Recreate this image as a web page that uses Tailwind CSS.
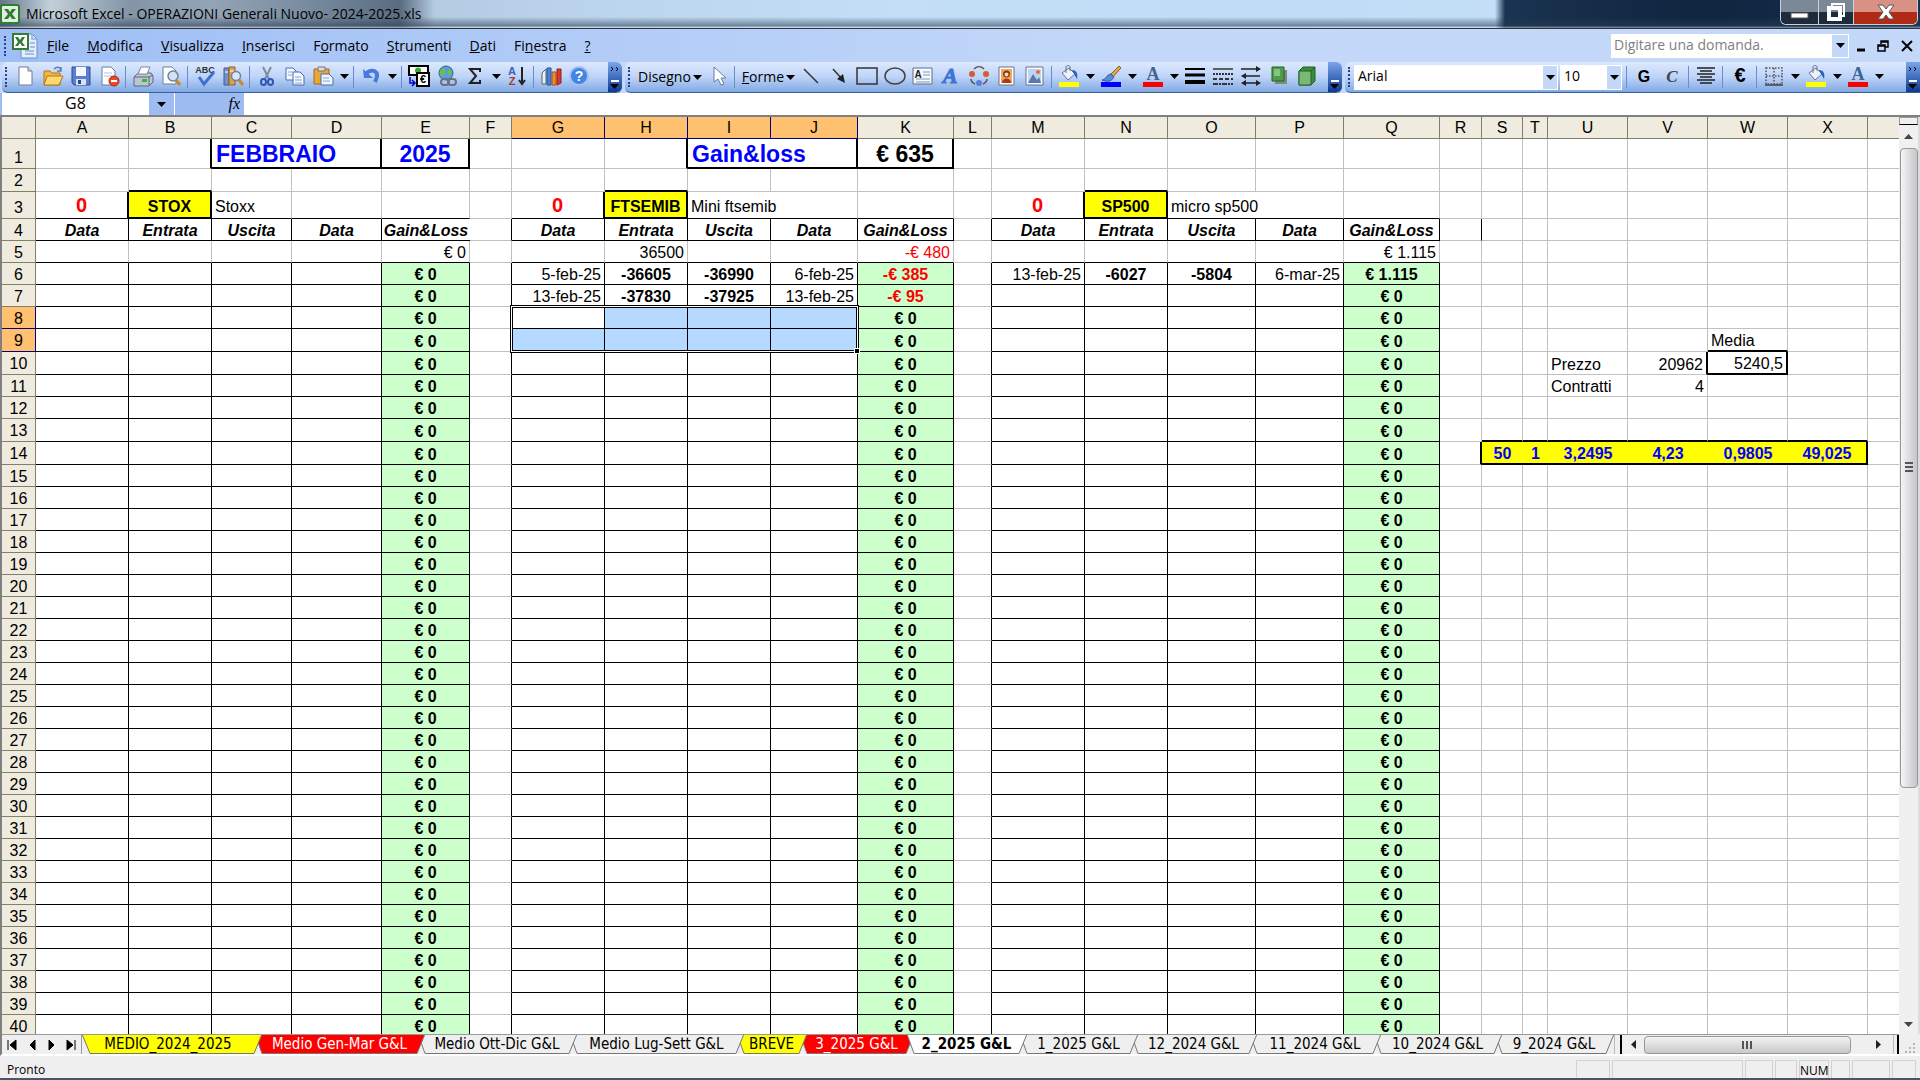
<!DOCTYPE html>
<html lang="it">
  <head>
    <meta charset="UTF-8" />
    <meta name="viewport" content="width=device-width, initial-scale=1.0" />
    <title>Microsoft Excel - OPERAZIONI Generali Nuovo- 2024-2025.xls</title>
    <script src="https://cdn.jsdelivr.net/npm/@tailwindcss/browser@4"></script>
  </head>
  <body
    class="flex h-screen flex-col overflow-hidden bg-[#efefef] font-['Open_Sans','Noto_Sans',sans-serif] text-sm text-black"
  >
    <!-- Title bar -->
    <header
      class="relative flex h-[29px] shrink-0 items-center justify-between border-b border-[#2b3442] bg-[linear-gradient(to_right,#64768a_0px,#c3d0da_50px,#8294a6_130px,#92a4b5_210px,#7b8da0_300px,#5a6c80_400px,#b4cbe2_435px,#bcd5ee_600px,#c3def6_900px,#bfdcf7_1300px,#c3def6_1495px,#1a3350_1505px,#0f2540_1700px,#16304d_1920px)]"
    >
      <div
        class="pointer-events-none absolute inset-0 bg-[linear-gradient(to_bottom,transparent_60%,rgba(40,60,85,0.55)_92%,rgba(255,255,255,0.5)_100%)]"
      ></div>
      <div class="relative flex items-center gap-1.5 pb-px">
        <svg class="h-5 w-5" viewBox="0 0 20 20">
          <rect x="1" y="1" width="18" height="18" rx="2" fill="#dfeedd" stroke="#2f7d32" stroke-width="2" />
          <path d="M4 5h4l2 3 2-3h4l-4 5 4 5h-4l-2-3-2 3H4l4-5z" fill="#2f7d32" />
        </svg>
        <h1 class="text-sm leading-5">
          Microsoft Excel - OPERAZIONI Generali Nuovo- 2024-2025.xls
        </h1>
      </div>
      <div
        class="relative mr-0.5 flex h-[25px] self-start overflow-hidden rounded-b-md border border-t-0 border-[#c9d3de]"
      >
        <button aria-label="Riduci a icona" class="flex h-full w-[38px] items-center justify-center border-r border-[#c9d3de] bg-linear-to-b from-[#7b8896] from-50% to-[#1d2b3c] to-50%">
          <svg class="h-4 w-5" viewBox="0 0 20 16"><rect x="1" y="9" width="17" height="5" fill="#fff" stroke="#555" /></svg>
        </button>
        <button aria-label="Ripristina" class="flex h-full w-[35px] items-center justify-center border-r border-[#c9d3de] bg-linear-to-b from-[#7b8896] from-50% to-[#1d2b3c] to-50%">
          <svg class="h-5 w-5" viewBox="0 0 20 20" fill="none" stroke="#fff" stroke-width="2"><path d="M6 4V2h12v12h-3" /><rect x="3" y="6" width="11" height="11" stroke-width="4" /></svg>
        </button>
        <button aria-label="Chiudi" class="flex h-full w-[63px] items-center justify-center bg-linear-to-b from-[#d99183] from-50% to-[#b02a16] to-50%">
          <svg class="h-5 w-6" viewBox="0 0 24 20"><path d="M4 3h5l3 4 3-4h5l-5 7 5 7h-5l-3-4-3 4H4l5-7z" fill="#fff" stroke="#555" /></svg>
        </button>
      </div>
    </header>

    <!-- Menu bar -->
    <nav
      class="flex h-[33px] shrink-0 items-center bg-linear-to-r from-[#9ebef5] to-[#c4d9f9] to-60% pl-1"
    >
      <span class="h-5 w-0 border-l-2 border-dotted border-[#27418a]"></span>
      <svg class="ml-1.5 h-7 w-[26px]" viewBox="0 0 26 28">
        <path d="M9 2h11l5 5v19H9z" fill="#e3edfb" stroke="#6c8fc9" />
        <path d="M20 2v5h5M13 19h9M13 22h9M18 11h5M18 15h5" fill="none" stroke="#8fb0e0" stroke-width="1.500" />
        <rect x="1" y="2" width="15" height="15" fill="#fff" stroke="#357a35" stroke-width="2" />
        <path d="M3 5h3l2 3 2-3h3l-3 5 3 4h-3l-2-3-2 3H3l3-4z" fill="#2f7d32" />
      </svg>
      <div id="menu" class="flex"></div>
      <div class="ml-auto flex h-6 w-[238px] border border-white bg-white">
        <input
          aria-label="Digitare una domanda"
          placeholder="Digitare una domanda."
          class="min-w-0 flex-1 px-0.5 pb-0.5 text-sm placeholder-[#808080] outline-none"
        />
        <button aria-label="Apri elenco domande" class="flex w-4 items-center justify-center bg-[#c4d9f9]">
          <svg class="h-[5px] w-[9px]" viewBox="0 0 9 5"><path d="M0 0h9L4.500 5z" /></svg>
        </button>
      </div>
      <div class="ml-px flex items-center">
        <button aria-label="Riduci finestra" class="flex w-[22px] justify-center"><svg class="h-4 w-3" viewBox="0 0 12 16"><path d="M2 12h8" stroke="#000" stroke-width="3" /></svg></button>
        <button aria-label="Ripristina finestra" class="flex w-[22px] justify-center"><svg class="h-4 w-3" viewBox="0 0 12 16" fill="none" stroke="#000" stroke-width="1.500"><path d="M4 6V3h7v6H8M4 4h7M1 7h7v6H1zM1 8h7" /></svg></button>
        <button aria-label="Chiudi finestra" class="flex w-[26px] justify-center"><svg class="h-4 w-3" viewBox="0 0 12 16"><path d="M1 3l10 10M11 3L1 13" stroke="#000" stroke-width="2" /></svg></button>
      </div>
    </nav>

    <!-- Toolbars -->
    <div class="flex h-[31px] shrink-0 gap-[3px] bg-[#c4d9f9] pl-0.5">
      <div id="standardBar" class="flex w-[620px] items-center overflow-hidden rounded-md border-b border-[#3b619c] bg-linear-to-b from-[#dde9fd] via-[#bdd3f8] to-[#81a9e2] pl-[3px]"></div>
      <div id="drawBar" class="flex w-[717px] items-center overflow-hidden rounded-md border-b border-[#3b619c] bg-linear-to-b from-[#dde9fd] via-[#bdd3f8] to-[#81a9e2] pl-[3px]"></div>
      <div id="formatBar" class="flex flex-1 items-center overflow-hidden rounded-l-md border-b border-[#3b619c] bg-linear-to-b from-[#dde9fd] via-[#bdd3f8] to-[#81a9e2] pl-[3px]">
        <span class="mr-1 h-5 w-0 border-l-2 border-dotted border-[#27418a]"></span>
        <div class="relative h-[25px] w-[204px] bg-white">
          <select aria-label="Tipo di carattere" class="h-full w-full appearance-none px-1 pb-0.5 text-sm outline-none"><option>Arial</option></select>
          <span class="pointer-events-none absolute inset-y-px right-px flex w-3.5 items-center justify-center bg-[#c4d9f9]"><svg class="h-[5px] w-[9px]" viewBox="0 0 9 5"><path d="M0 0h9L4.500 5z" /></svg></span>
        </div>
        <div class="relative mr-0.5 ml-0.5 h-[25px] w-[62px] bg-white">
          <select aria-label="Dimensione carattere" class="h-full w-full appearance-none px-1 pb-0.5 text-sm outline-none"><option>10</option></select>
          <span class="pointer-events-none absolute inset-y-px right-px flex w-3.5 items-center justify-center bg-[#c4d9f9]"><svg class="h-[5px] w-[9px]" viewBox="0 0 9 5"><path d="M0 0h9L4.500 5z" /></svg></span>
        </div>
      </div>
    </div>

    <!-- Formula bar -->
    <div class="flex h-[22px] shrink-0 bg-white">
      <div class="flex w-[174px] border-l-2 border-[#9fbcf2] bg-[#9fbcf2]">
        <input aria-label="Casella nome" value="G8" class="min-w-0 flex-1 bg-white pb-0.5 text-center text-base leading-4 outline-none" />
        <button aria-label="Elenco nomi" class="flex w-[25px] items-center justify-center"><svg class="h-[5px] w-[9px]" viewBox="0 0 9 5"><path d="M0 0h9L4.500 5z" /></svg></button>
      </div>
      <div class="ml-px flex w-[69px] items-center justify-end bg-[#9fbcf2] pr-1">
        <button aria-label="Inserisci funzione" class="font-['Liberation_Serif',serif] text-base leading-5 italic">fx</button>
      </div>
      <input aria-label="Barra della formula" class="min-w-0 flex-1 bg-white outline-none" />
    </div>

    <!-- Sheet -->
    <main class="flex min-h-0 flex-1 border-t-2 border-l-2 border-[#808080] bg-white">
      <div class="min-w-0 flex-1 overflow-hidden">
        <table
          id="sheet"
          class="w-full table-fixed border-separate border-spacing-0 font-['Liberation_Sans',Arial,sans-serif] text-base leading-[18px]"
        >
          <colgroup id="cols"></colgroup>
          <thead><tr id="colHeads" class="h-[22px]"></tr></thead>
          <tbody id="rows"></tbody>
        </table>
      </div>
      <!-- Vertical scrollbar -->
      <div class="flex w-[21px] shrink-0 flex-col items-center border-r-2 border-[#dcdcdc] bg-[#f0f0f0]">
        <div class="h-2 w-full border border-[#999] border-b-black bg-[#efefef]"></div>
        <button aria-label="Scorri su" class="flex h-[23px] items-center"><svg class="h-[5px] w-[9px]" viewBox="0 0 9 5"><path d="M0 5h9L4.500 0z" fill="#444" /></svg></button>
        <div class="flex h-[640px] w-[18px] items-center justify-center rounded-sm border border-[#989898] bg-linear-to-r from-[#f5f5f5] to-[#c6c6ca]">
          <svg class="h-3 w-2" viewBox="0 0 8 12"><path d="M0 1h8M0 5h8M0 9h8" stroke="#555" stroke-width="2" /></svg>
        </div>
        <button aria-label="Scorri giù" class="mt-auto flex h-5 items-center"><svg class="h-[5px] w-[9px]" viewBox="0 0 9 5"><path d="M0 0h9L4.500 5z" fill="#444" /></svg></button>
      </div>
    </main>

    <!-- Sheet tabs -->
    <div class="flex h-[22px] shrink-0 border-b-2 border-l-2 border-b-white border-l-[#808080] bg-[#efefef]">
      <div id="tabNav" class="flex w-20 shrink-0 items-center justify-around border-t border-r border-[#999]"></div>
      <div id="tabs" class="flex min-w-0 flex-1 overflow-hidden border-t border-[#999] font-['DejaVu_Sans_Condensed','Open_Sans',sans-serif]"></div>
      <div class="flex w-[285px] shrink-0 items-center border-t border-[#999]">
        <span class="h-full w-2 border-r-2 border-l border-r-black border-l-[#bbb]"></span>
        <button aria-label="Scorri a sinistra" class="flex w-[22px] justify-center"><svg class="h-[9px] w-[5px]" viewBox="0 0 5 9"><path d="M5 0v9L0 4.500z" fill="#222" /></svg></button>
        <div class="flex h-[18px] flex-1 items-center justify-center rounded-sm border border-[#989898] bg-linear-to-b from-[#f3f3f3] to-[#c9c9cc]">
          <svg class="h-2 w-3" viewBox="0 0 12 8"><path d="M1 0v8M5 0v8M9 0v8" stroke="#555" stroke-width="2" /></svg>
        </div>
        <button aria-label="Scorri a destra" class="mr-1 ml-4 flex w-[22px] justify-center"><svg class="h-[9px] w-[5px]" viewBox="0 0 5 9"><path d="M0 0v9l5-4.500z" fill="#222" /></svg></button>
        <span class="h-full w-1.5 border-r-2 border-l border-r-black border-l-[#bbb]"></span>
      </div>
      <div class="flex w-[21px] shrink-0 items-end justify-center">
        <svg class="h-3 w-3" viewBox="0 0 12 12" fill="#b5b5b5"><path d="M9 1h2v2H9zM5 5h2v2H5zM9 5h2v2H9zM1 9h2v2H1zM5 9h2v2H5zM9 9h2v2H9z" /></svg>
      </div>
    </div>

    <!-- Status bar -->
    <footer class="flex h-6 shrink-0 items-stretch justify-between border-b-2 border-[#4a5568] bg-[#efefef] pt-1 pr-1">
      <span class="pl-[7px] text-xs leading-5">Pronto</span>
      <div id="panels" class="flex gap-0.5 text-xs leading-5"></div>
    </footer>

    <script>
      // ---------- icons ----------
      const arrowSvg =
        '<svg class="h-[5px] w-[9px]" viewBox="0 0 9 5"><path d="M0 0h9L4.5 5z"/></svg>';

      const bucket =
        '<path d="M4 8l7-5 6 6-7 6z" fill="#eef3fb" stroke="#66748c"/><path d="M8 8V2c0-2 4-2 4 0v4" fill="none" stroke="#66748c"/><path d="M14 5c5 0 6 4 5 9l-3-5z" fill="#2f5fc0"/><path d="M1 17h20v5H1z" fill="#ff0"/>';
      const letterA =
        '<text x="11" y="15" text-anchor="middle" font-family="Liberation Serif" font-weight="bold" font-size="18" fill="#3e6496">A</text><path d="M1 17h20v5H1z" fill="#f00"/>';

      const icons = {
        new: '<path d="M5 2h9l4 4v14H5z" fill="#fff" stroke="#6b7f9f"/><path d="M14 2v4h4" fill="#d3deef" stroke="#6b7f9f"/>',
        open: '<path d="M2 6h6l2 2h8v12H2z" fill="#f3b53c" stroke="#b5761c"/><path d="M5 11h16l-4 9H2z" fill="#ffd86f" stroke="#b5761c"/><path d="M12 4c3-3 6-2 7 1M19 2v4h-4" fill="none" stroke="#5b7fae" stroke-width="1.5"/>',
        save: '<path d="M2 2h18v18H4l-2-2z" fill="#5a7fd0" stroke="#2b4a93"/><path d="M6 2h10v9H6z" fill="#f2f5fb"/><path d="M6 14h10v6H6z" fill="#d9e2f3"/><path d="M8 15h3v4H8z" fill="#2b4a93"/>',
        perm: '<path d="M4 2h9l4 4v14H4z" fill="#fff" stroke="#6b7f9f"/><path d="M6 8h8M6 11h8" stroke="#b4c3dd"/><circle cx="16" cy="16" r="5" fill="#e8492a" stroke="#a92c12"/><path d="M13 16h6" stroke="#fff" stroke-width="2"/>',
        print: '<path d="M2 12l4-4h13l2 3v6l-4 4H2z" fill="#bcc5d2" stroke="#5d6878"/><path d="M9 2h9l-3 7H6z" fill="#fff" stroke="#7b8799"/><path d="M2 12h15v8M17 12l4-2" fill="none" stroke="#5d6878"/><path d="M10 14h5v3h-5z" fill="#3fb52f"/>',
        preview: '<path d="M3 2h9l4 4v13H3z" fill="#fff" stroke="#6b7f9f"/><circle cx="13" cy="11" r="5" fill="#cfe3f7" stroke="#6f8299" stroke-width="1.5"/><path d="M16 15l4 5" stroke="#c8882d" stroke-width="3"/>',
        spell: '<text x="11" y="8" text-anchor="middle" font-family="Liberation Sans" font-weight="bold" font-size="9" fill="#333">ABC</text><path d="M5 12l5 7L20 7" fill="none" stroke="#3f6fd1" stroke-width="3"/>',
        research: '<path d="M2 3h5v17H2z" fill="#7890c9" stroke="#44588f"/><path d="M7 2h6v18H7z" fill="#d9a14d" stroke="#8a6424"/><path d="M3 7h3M8 6h4" stroke="#fff"/><circle cx="14" cy="11" r="4.500" fill="#d8e8f8" stroke="#6f8299" stroke-width="1.5"/><path d="M17 15l4 5" stroke="#c8882d" stroke-width="3"/>',
        cut: '<path d="M7 2l6 12M15 2L9 14" stroke="#7c8ca3" stroke-width="2"/><ellipse cx="7.500" cy="17" rx="2.500" ry="3" fill="none" stroke="#2c57b8" stroke-width="2"/><ellipse cx="14.500" cy="17" rx="2.500" ry="3" fill="none" stroke="#2c57b8" stroke-width="2"/>',
        copy: '<path d="M2 3h7l3 3v9H2z" fill="#f4f8ff" stroke="#4b6cab"/><path d="M9 7h7l4 4v9H9z" fill="#f4f8ff" stroke="#4b6cab"/><path d="M4 7h5M4 10h4M11 12h6M11 15h7M11 18h7" stroke="#8aa5d6"/>',
        paste: '<path d="M2 4h15v15H2z" fill="#e9a63a" stroke="#a36b17"/><path d="M6 2h7v4H6z" fill="#d9dde5" stroke="#777"/><path d="M9 9h8l4 4v7H9z" fill="#eff5ff" stroke="#4b6cab"/><path d="M11 13h6M11 16h7" stroke="#8aa5d6"/>',
        undo: '<path d="M3 4l1 9h9z" fill="#4a78dc"/><path d="M6 9c5-6 15-4 9 8" fill="none" stroke="#4a78dc" stroke-width="4"/>',
        currency: '<path d="M1 1h19v9H1z" fill="#fff" stroke="#000" stroke-width="2"/><circle cx="10" cy="5.500" r="3" fill="#3a3"/><path d="M9 8h12v13H9z" fill="#fff" stroke="#000" stroke-width="2"/><text x="15" y="18" text-anchor="middle" font-family="Liberation Sans" font-weight="bold" font-size="11">€</text><path d="M2 12v6h5M4 15l3 3-3 3" fill="none" stroke="#00c" stroke-width="1.500"/>',
        link: '<circle cx="10" cy="8" r="7" fill="#5b9be0" stroke="#33639b"/><path d="M6 3c3 0 5 2 3 4s0 4-3 4-3-5 0-8zM13 4l3 3-2 4-3-2z" fill="#6cbf4b"/><rect x="5" y="14" width="8" height="6" rx="3" fill="none" stroke="#68727f" stroke-width="2"/><rect x="12" y="14" width="8" height="6" rx="3" fill="none" stroke="#68727f" stroke-width="2"/>',
        sum: '<path d="M16 7V4H6l6 7-6 7h10v-3" fill="none" stroke="#222" stroke-width="2"/>',
        sort: '<text x="6" y="10" text-anchor="middle" font-family="Liberation Sans" font-weight="bold" font-size="11" fill="#3a62b5">A</text><text x="6" y="20" text-anchor="middle" font-family="Liberation Sans" font-weight="bold" font-size="11" fill="#a33c3c">Z</text><path d="M16 2v17M13 15l3 4 3-4" fill="none" stroke="#222" stroke-width="2"/>',
        chart: '<path d="M2 8l4-4v15H2z" fill="#e9eef7" stroke="#566"/><path d="M7 3h4v17H7z" fill="#4b83dc" stroke="#24529b"/><path d="M12 7h4v13h-4z" fill="#ef8d2d" stroke="#a35414"/><path d="M17 4h4v14l-4 2z" fill="#d93a28" stroke="#8d2013"/>',
        help: '<circle cx="11" cy="11" r="9" fill="#4484e4" stroke="#9fc1f3" stroke-width="2"/><text x="11" y="16" text-anchor="middle" font-family="Liberation Sans" font-weight="bold" font-size="14" fill="#fff">?</text>',
        pointer: '<path d="M7 2v15l4-3 3 6 3-1-3-6h5z" fill="#fff" stroke="#6d7d99"/>',
        line: '<path d="M4 4l14 14" stroke="#333" stroke-width="1.500"/>',
        arrow: '<path d="M5 4l9 10" stroke="#333" stroke-width="1.500"/><path d="M17 18l-8-4 6-5z" fill="#222"/>',
        rect: '<path d="M1 3h20v16H1z" fill="none" stroke="#333" stroke-width="1.500"/>',
        oval: '<ellipse cx="11" cy="11" rx="10" ry="8" fill="none" stroke="#444" stroke-width="1.500"/>',
        textbox: '<path d="M1 3h19v16H1z" fill="#f4f8ff" stroke="#5c6f92"/><text x="6" y="13" text-anchor="middle" font-family="Liberation Sans" font-weight="bold" font-size="10" fill="#222">A</text><path d="M11 7h7M11 10h7M4 14h14M4 17h14" stroke="#8194b5"/>',
        wordart: '<text x="10" y="18" text-anchor="middle" font-family="Liberation Serif" font-style="italic" font-weight="bold" font-size="22" fill="#3f74d4" stroke="#3f74d4">A</text>',
        diagram: '<circle cx="4" cy="9" r="3" fill="#d55b33"/><circle cx="18" cy="9" r="3" fill="#d55b33"/><circle cx="11" cy="18" r="3" fill="#5a7fd6"/><path d="M6 4c3-3 7-3 10 0M3 14c0 3 2 4 4 5M19 14c0 3-2 4-4 5" fill="none" stroke="#555" stroke-width="1.500"/>',
        clip: '<path d="M3 2h15v18H3z" fill="#fff" stroke="#66748c"/><path d="M5 4h11v14H5z" fill="#f2a65a"/><circle cx="10.500" cy="9" r="3.500" fill="#7b3d16"/><circle cx="10.500" cy="9.500" r="2" fill="#ffd9ae"/><path d="M6 18c0-6 9-6 9 0z" fill="#a33b1c"/>',
        picture: '<path d="M2 2h17v18H2z" fill="#f7faff" stroke="#66748c"/><path d="M4 4h13v14H4z" fill="#bcd5f4"/><path d="M4 18l5-9 4 6 2-3 2 6z" fill="#5a79ab"/><circle cx="14" cy="7" r="2" fill="#e46a33"/>',
        fill: bucket,
        brush: '<path d="M19 1l2 2-9 10-3-2z" fill="#e4a24e" stroke="#8a6424"/><path d="M11 9l3 3c-3 5-7 5-12 3 4 0 4-5 9-6z" fill="#5b8ad9" stroke="#2b569f"/><path d="M1 17h20v5H1z" fill="#00f"/>',
        fontcolor: letterA,
        weight: '<path d="M1 4h20" stroke="#000" stroke-width="2"/><path d="M1 10h20" stroke="#000" stroke-width="3"/><path d="M1 17h20" stroke="#000" stroke-width="4"/>',
        dash: '<path d="M1 4h20" stroke="#333" stroke-width="1.500"/><path d="M1 9h20" stroke="#333" stroke-width="2" stroke-dasharray="2 1"/><path d="M1 14h20" stroke="#333" stroke-width="2" stroke-dasharray="4 2"/><path d="M1 19h20" stroke="#333" stroke-width="2" stroke-dasharray="5 1 2 1"/>',
        arrows: '<path d="M1 4h17M2 11h18M4 18h14" stroke="#222" stroke-width="1.500"/><path d="M16 1l5 3-5 3zM6 8l-5 3 5 3zM6 15l-5 3 5 3zM16 15l5 3-5 3z" fill="#222"/>',
        shadow: '<path d="M7 5h12v14H7z" fill="#7d8a80"/><path d="M4 2h12v14H4z" fill="#4f9a4b" stroke="#24602a"/><path d="M6 4h6v7H6z" fill="#86c47b"/>',
        cube: '<path d="M3 6l4-4h12v14l-4 4H3z" fill="#3d8a41" stroke="#24602a"/><path d="M3 6h12v14H3z" fill="#79b973" stroke="#24602a"/><path d="M15 6l4-4" stroke="#24602a"/>',
        bold: '<text x="11" y="17" text-anchor="middle" font-family="Liberation Sans" font-weight="bold" font-size="16">G</text>',
        italic: '<text x="11" y="17" text-anchor="middle" font-family="Liberation Serif" font-style="italic" font-weight="bold" font-size="17" fill="#444">C</text>',
        center: '<path d="M2 3h18M5 6h12M2 9h18M5 12h12M2 15h18M5 18h12" stroke="#222" stroke-width="1.500"/>',
        euro: '<text x="11" y="17" text-anchor="middle" font-family="Liberation Sans" font-weight="bold" font-size="20">€</text>',
        borders: '<path d="M3 3h16v16H3zM11 3v16M3 11h16" fill="none" stroke="#555" stroke-width="1.500" stroke-dasharray="1.500 1.500"/><path d="M2 20h18" stroke="#444" stroke-width="1.500"/>',
      };

      const button = (name, label) =>
        `<button aria-label="${label}" class="flex w-7 shrink-0 items-center justify-center pb-0.5"><svg class="h-[22px] w-[22px]" viewBox="0 0 22 22">${icons[name]}</svg></button>`;
      const drop = (label) =>
        `<button aria-label="${label}" class="flex h-6 w-3.5 shrink-0 items-center justify-center pb-0.5">${arrowSvg}</button>`;
      const textButton = (html) =>
        `<button class="flex shrink-0 items-center gap-0.5 pr-0.5 pl-1 text-sm leading-6"><span>${html}</span>${arrowSvg}</button>`;
      const sep =
        '<span class="mr-[3px] ml-0.5 h-[22px] w-px shrink-0 bg-[#6a8ccb]"></span>';
      const grip =
        '<span class="mr-1 h-5 w-0 shrink-0 border-l-2 border-dotted border-[#27418a]"></span>';
      const chevron = (more) =>
        `<button aria-label="Opzioni barra degli strumenti" class="ml-auto flex h-full w-3.5 shrink-0 flex-col items-center justify-end bg-linear-to-b from-[#7ba5ea] to-[#0a3a92] pb-0.5"><svg class="h-6 w-2.5" viewBox="0 0 10 24" fill="none" stroke="#fff">${
          more ? '<path d="M1 1l2 2-2 2M6 1l2 2-2 2" stroke="#000"/>' : ""
        }<path d="M1 15h8" stroke-width="2"/><path d="M0 18h9L4.500 23z" fill="#000" stroke="none"/></svg></button>`;

      document.getElementById("standardBar").innerHTML =
        grip +
        button("new", "Nuovo") + button("open", "Apri") + button("save", "Salva") + button("perm", "Autorizzazione") + sep +
        button("print", "Stampa") + button("preview", "Anteprima di stampa") + sep +
        button("spell", "Controllo ortografia") + button("research", "Ricerche") + sep +
        button("cut", "Taglia") + button("copy", "Copia") + button("paste", "Incolla") + drop("Opzioni Incolla") + sep +
        button("undo", "Annulla") + drop("Elenco Annulla") + sep +
        button("currency", "Converti in euro") + button("link", "Collegamento ipertestuale") +
        button("sum", "Somma automatica") + drop("Altre funzioni") + button("sort", "Ordinamento crescente") + sep +
        button("chart", "Creazione guidata Grafico") + button("help", "Guida") + chevron(true);

      document.getElementById("drawBar").innerHTML =
        grip + textButton("Disegno") + button("pointer", "Seleziona oggetti") + sep +
        textButton("<u>F</u>orme") + button("line", "Linea") + button("arrow", "Freccia") +
        button("rect", "Rettangolo") + button("oval", "Ovale") + button("textbox", "Casella di testo") +
        button("wordart", "Inserisci WordArt") + button("diagram", "Inserisci diagramma") +
        button("clip", "Inserisci ClipArt") + button("picture", "Inserisci immagine") + sep +
        button("fill", "Colore riempimento") + drop("Altri colori riempimento") +
        button("brush", "Colore linea") + drop("Altri colori linea") +
        button("fontcolor", "Colore carattere") + drop("Altri colori carattere") +
        button("weight", "Stile linea") + button("dash", "Stile tratteggio") + button("arrows", "Stile freccia") +
        button("shadow", "Stile ombreggiatura") + button("cube", "Stile 3D") + chevron(false);

      document.getElementById("formatBar").insertAdjacentHTML(
        "beforeend",
        sep + button("bold", "Grassetto") + button("italic", "Corsivo") + sep +
          button("center", "Centra") + sep + button("euro", "Euro") + sep +
          button("borders", "Bordi") + drop("Altri bordi") +
          button("fill", "Riempimento cella") + drop("Altri riempimenti") +
          button("fontcolor", "Colore testo") + drop("Altri colori testo") + chevron(true)
      );

      // ---------- menu ----------
      document.getElementById("menu").innerHTML = [
        "<u>F</u>ile", "<u>M</u>odifica", "<u>V</u>isualizza", "<u>I</u>nserisci",
        "F<u>o</u>rmato", "<u>S</u>trumenti", "<u>D</u>ati", "Fi<u>n</u>estra", "<u>?</u>",
      ]
        .map((item) => `<button class="px-[9px] text-sm">${item}</button>`)
        .join("");

      // ---------- sheet ----------
      const letters = "ABCDEFGHIJKLMNOPQRSTUVWX".split("");
      const widths = [
        93, 83, 80, 90, 88, 42, 93, 83, 83, 87, 96, 38,
        93, 83, 88, 88, 96, 42, 41, 25, 80, 80, 80, 80,
      ];
      const heights = { 1: 30, 2: 23, 3: 27, 9: 23, 10: 23, 13: 23, 14: 23 };
      const blocks = "ABCDEGHIJKMNOPQ";
      const selected = "GHIJ";

      const left = "px-[3px] text-left";
      const right = "px-[3px] text-right";
      const strong = "text-center font-bold";
      const green = "text-center font-bold bg-[#ccffcc]";
      const greenLoss = "text-center font-bold text-[#ff0000] bg-[#ccffcc]";

      const cells = {
        C1: { text: "FEBBRAIO", cls: "px-1 text-left text-[23px] leading-[26px] font-bold text-[#0000ff]", span: 2 },
        E1: { text: "2025", cls: "text-center text-[23px] leading-[26px] font-bold text-[#0000ff]" },
        I1: { text: "Gain&amp;loss", cls: "px-1 text-left text-[23px] leading-[26px] font-bold text-[#0000ff]", span: 2 },
        K1: { text: "€ 635", cls: "text-center text-[23px] leading-[26px] font-bold" },
        E5: { text: "€ 0", cls: right },
        H5: { text: "36500", cls: right },
        K5: { text: "-€ 480", cls: "px-[3px] text-right text-[#ff0000]" },
        Q5: { text: "€ 1.115", cls: right },
        G6: { text: "5-feb-25", cls: right },
        H6: { text: "-36605", cls: strong },
        I6: { text: "-36990", cls: strong },
        J6: { text: "6-feb-25", cls: right },
        K6: { text: "-€ 385", cls: greenLoss },
        M6: { text: "13-feb-25", cls: right },
        N6: { text: "-6027", cls: strong },
        O6: { text: "-5804", cls: strong },
        P6: { text: "6-mar-25", cls: right },
        Q6: { text: "€ 1.115", cls: green },
        G7: { text: "13-feb-25", cls: right },
        H7: { text: "-37830", cls: strong },
        I7: { text: "-37925", cls: strong },
        J7: { text: "13-feb-25", cls: right },
        K7: { text: "-€ 95", cls: greenLoss },
        W9: { text: "Media", cls: left },
        U10: { text: "Prezzo", cls: left },
        V10: { text: "20962", cls: right },
        W10: { text: "5240,5", cls: right },
        U11: { text: "Contratti", cls: left },
        V11: { text: "4", cls: right },
      };

      // One trading block per instrument: total, code and description in row 3
      [
        ["A", "STOX", "Stoxx"],
        ["G", "FTSEMIB", "Mini ftsemib"],
        ["M", "SP500", "micro sp500"],
      ].forEach(([first, code, name]) => {
        const col = (n) => letters[letters.indexOf(first) + n];
        cells[col(0) + 3] = { text: "0", cls: "text-center text-xl leading-[26px] font-bold text-[#ff0000]" };
        cells[col(1) + 3] = { text: code, cls: "text-center leading-5 font-bold bg-[#ffff00]" };
        cells[col(2) + 3] = { text: name, cls: "px-[3px] text-left leading-[22px]" };
        ["Data", "Entrata", "Uscita", "Data", "Gain&amp;Loss"].forEach((title, n) => {
          cells[col(n) + 4] = { text: title, cls: "text-center font-bold italic" };
        });
      });

      ["50", "1", "3,2495", "4,23", "0,9805", "49,025"].forEach((value, n) => {
        cells[letters[18 + n] + 14] = {
          text: value,
          cls: "text-center font-bold text-[#0000ff] bg-[#ffff00]",
        };
      });

      // Cells that carry a side of one of the thick boxes
      const thick = {
        B1: "border-r-2 border-b border-r-black border-b-[#c0c0c0]",
        C1: "border-r-2 border-b-2 border-black",
        E1: "border-r-2 border-b-2 border-black",
        H1: "border-r-2 border-b border-r-black border-b-[#c0c0c0]",
        I1: "border-r-2 border-b-2 border-black",
        K1: "border-r-2 border-b-2 border-black",
        W9: "border-r border-b-2 border-r-[#c0c0c0] border-b-black",
        V10: "border-r-2 border-b border-r-black border-b-[#c0c0c0]",
        W10: "border-r-2 border-b-2 border-black",
        R14: "border-r-2 border-b border-r-black border-b-[#c0c0c0]",
        X14: "border-r-2 border-b-2 border-black",
      };
      ["AB", "GH", "MN"].forEach(([before, code]) => {
        thick[code + 2] = "border-r border-b-2 border-r-[#c0c0c0] border-b-black";
        thick[before + 3] = "border-r-2 border-b border-black";
        thick[code + 3] = "border-r-2 border-b-2 border-black";
      });
      "STUVWX".split("").forEach((col) => {
        thick[col + 13] = "border-r border-b-2 border-r-[#c0c0c0] border-b-black";
        if (col !== "X") thick[col + 14] = "border-b-2 border-black";
      });

      function borderClass(col, row) {
        if (thick[col + row]) return thick[col + row];
        const inBlock = blocks.includes(col);
        // a description runs over into the next cell
        if (row === 3 && "IO".includes(col)) return "border-b border-black";
        if (row === 4 && col === "E") return "border-b border-black";
        if (row === 4 && col === "R") return "border-r border-b border-r-black border-b-[#c0c0c0]";
        if (inBlock && (row === 3 || row === 5)) return "border-r border-b border-r-[#c0c0c0] border-b-black";
        if (row === 4 || row > 5) {
          if (inBlock) return "border-r border-b border-black";
          if (col === "F" || col === "L") return "border-r border-b border-r-black border-b-[#c0c0c0]";
        }
        return "border-r border-b border-[#c0c0c0]";
      }

      document.getElementById("cols").innerHTML =
        '<col style="width: 34px">' +
        widths.map((w) => `<col style="width: ${w}px">`).join("") +
        "<col>";

      document.getElementById("colHeads").innerHTML =
        '<th class="border-r border-b border-[#808069] bg-[#efebde]"></th>' +
        letters
          .map((col) => {
            const look = selected.includes(col)
              ? "border-[#000080] bg-[#ffc06f]"
              : "border-[#808069] bg-[#efebde]";
            return `<th scope="col" class="border-r border-b p-0 font-normal ${look}">${col}</th>`;
          })
          .join("") +
        '<th class="border-b border-[#808069] bg-[#efebde]"></th>';

      const selection = `
        <div class="absolute -top-0.5 -left-0.5 z-10 h-12 w-[349px] border border-black">
          <div class="h-full w-full border border-white">
            <div class="h-full w-full border border-black"></div>
          </div>
          <span class="absolute -right-0.5 -bottom-0.5 h-1.5 w-1.5 border border-white bg-black"></span>
        </div>`;

      let html = "";
      for (let row = 1; row <= 40; row++) {
        const active = row === 8 || row === 9;
        const rowLook = active
          ? "border-[#000080] bg-[#ffc06f]"
          : "border-[#808069] bg-[#efebde]";
        // tall rows keep the number a little above the bottom line
        const rowLeading = heights[row] ? "leading-5" : "leading-[18px]";
        html += `<tr style="height: ${heights[row] || 22}px"><th scope="row" class="border-r border-b p-0 align-bottom font-normal ${rowLeading} ${rowLook}">${row}</th>`;
        let skip = 0;
        letters.forEach((col) => {
          if (skip > 0) {
            skip--;
            return;
          }
          let cell = cells[col + row] || { text: "", cls: "" };
          if (col + row === "G8") {
            cell = { text: selection, cls: "relative" };
          } else if (active && selected.includes(col)) {
            cell = { text: "", cls: "bg-[#b5d9ff]" };
          } else if (row > 5 && "EKQ".includes(col) && !cell.text) {
            cell = { text: "€ 0", cls: green };
          }
          const pad = cell.cls.includes("px-") ? "" : "p-0";
          const span = cell.span ? ` colspan="${cell.span}"` : "";
          if (cell.span) skip = cell.span - 1;
          html += `<td${span} class="align-bottom whitespace-nowrap ${pad} ${borderClass(col, row)} ${cell.cls}">${cell.text}</td>`;
        });
        html += '<td class="border-b border-[#c0c0c0]"></td></tr>';
      }
      document.getElementById("rows").innerHTML = html;

      // ---------- sheet tabs ----------
      const tabs = [
        { name: "MEDIO_2024_2025", w: 180, fill: "#ffff00" },
        { name: "Medio Gen-Mar G&amp;L", w: 163, fill: "#ff0000" },
        { name: "Medio Ott-Dic G&amp;L", w: 152 },
        { name: "Medio Lug-Sett G&amp;L", w: 167 },
        { name: "BREVE", w: 63, fill: "#ffff00" },
        { name: "3_2025 G&amp;L", w: 107, fill: "#ff0000" },
        { name: "2_2025 G&amp;L", w: 113, active: true },
        { name: "1_2025 G&amp;L", w: 111 },
        { name: "12_2024 G&amp;L", w: 119 },
        { name: "11_2024 G&amp;L", w: 124 },
        { name: "10_2024 G&amp;L", w: 121 },
        { name: "9_2024 G&amp;L", w: 112 },
      ];
      document.getElementById("tabs").innerHTML = tabs
        .map((tab, i) => {
          const look = tab.active
            ? "font-bold text-black"
            : tab.fill === "#ff0000"
              ? "text-white"
              : "text-black";
          const fill = tab.active ? "#ffffff" : tab.fill || "#efefef";
          // the right slope leans over the left slope of the next tab
          return `<button class="relative shrink-0 pr-2 text-[15px] leading-[19px] whitespace-nowrap ${look}" style="width: ${tab.w}px; z-index: ${tab.active ? 20 : 12 - i}">
            <svg class="absolute top-0 left-0 h-[19px] overflow-visible" width="${tab.w}" height="19"><path d="M${i ? -7 : 0} -1L${i ? 0 : 8} 18.500H${tab.w - 8}L${tab.w} -1" fill="${fill}" stroke="#777"/></svg>
            <span class="relative">${tab.name}</span>
          </button>`;
        })
        .join("");

      document.getElementById("tabNav").innerHTML = [
        ["Primo foglio", "M2 1v10M10 1v10L4 6z"],
        ["Foglio precedente", "M9 1v10L4 6z"],
        ["Foglio successivo", "M4 1v10l5-5z"],
        ["Ultimo foglio", "M10 1v10M2 1v10l6-5z"],
      ]
        .map(
          ([label, d]) =>
            `<button aria-label="${label}"><svg class="h-3 w-3" viewBox="0 0 12 12"><path d="${d}" stroke="#000"/></svg></button>`
        )
        .join("");

      // ---------- status panels ----------
      document.getElementById("panels").innerHTML = [34, 131, 28, 22, 30, 19, 38, 24]
        .map(
          (w, i) =>
            `<span class="border border-b-0 border-[#d2d2d2] text-center whitespace-nowrap" style="width: ${w}px">${i === 4 ? "NUM" : ""}</span>`
        )
        .join("");
    </script>
  </body>
</html>
